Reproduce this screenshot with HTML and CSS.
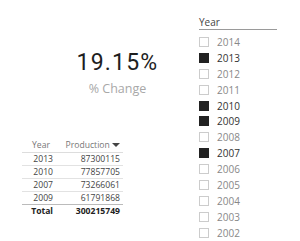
FILE: index.html
```html
<!DOCTYPE html>
<html lang="en">
<head>
    <meta charset="UTF-8">
    <title>Production</title>
    <link rel="stylesheet" href="styles.css">
</head>
<body>
    <div class="page">
        <div class="left">
            <!-- Карточка -->
            <div class="card">
                <div class="card-value">19.15%</div>
                <div class="card-label">% Change</div>
            </div>

            <!-- Таблица -->
            <table class="grid">
                <thead>
                    <tr>
                        <th class="col-year">Year</th>
                        <th class="col-prod">Production <span class="sort"></span></th>
                    </tr>
                </thead>
                <tbody>
                    <tr><td>2013</td><td>87300115</td></tr>
                    <tr><td>2010</td><td>77857705</td></tr>
                    <tr><td>2007</td><td>73266061</td></tr>
                    <tr><td>2009</td><td>61791868</td></tr>
                </tbody>
                <tfoot>
                    <tr><td>Total</td><td>300215749</td></tr>
                </tfoot>
            </table>
        </div>

        <!-- Слайсер -->
        <div class="slicer">
            <div class="slicer-title">Year</div>
            <ul class="slicer-list">
                <li><span class="box"></span>2014</li>
                <li class="on"><span class="box"></span>2013</li>
                <li><span class="box"></span>2012</li>
                <li><span class="box"></span>2011</li>
                <li class="on"><span class="box"></span>2010</li>
                <li class="on"><span class="box"></span>2009</li>
                <li><span class="box"></span>2008</li>
                <li class="on"><span class="box"></span>2007</li>
                <li><span class="box"></span>2006</li>
                <li><span class="box"></span>2005</li>
                <li><span class="box"></span>2004</li>
                <li><span class="box"></span>2003</li>
                <li><span class="box"></span>2002</li>
            </ul>
        </div>
    </div>
</body>
</html>
```

FILE: styles.css
```css
body {
    margin: 0;
    background-color: #fff;
    font-family: "Open Sans", "Liberation Sans", sans-serif;
    color: #333;
}

.page {
    display: flex;
    width: 300px;
    height: 241px;
    overflow: hidden;
}

.left {
    width: 199px;
    padding-top: 50px;
}

/* Карточка */
.card {
    display: flex;
    flex-direction: column;
    align-items: center;
    padding-left: 36px;
}

.card-value {
    font-family: "Roboto", sans-serif;
    font-weight: 400;
    font-size: 23px;
    letter-spacing: 1.2px;
    line-height: 26px;
    color: #1e1e1e;
}

.card-label {
    font-size: 12.5px;
    line-height: 16px;
    margin-top: 5px;
    color: #a8a8a8;
}

/* Таблица */
.grid {
    margin: 42px 0 0 22px;
    width: 101px;
    border-collapse: collapse;
    font-size: 8.6px;
    color: #444;
}

.grid th {
    font-weight: normal;
    color: #777;
    padding: 0 0 1px 0;
    height: 12px;
    text-align: left;
    border-bottom: 1px solid #ddd;
}

.grid th.col-year {
    padding-left: 10px;
}

.grid th.col-prod {
    text-align: right;
    padding-right: 3px;
    white-space: nowrap;
}

.sort {
    display: inline-block;
    width: 0;
    height: 0;
    border-left: 4px solid transparent;
    border-right: 4px solid transparent;
    border-top: 4px solid #444;
    vertical-align: 1px;
}

.grid td {
    height: 12px;
    padding: 0 3px 0 0;
    text-align: right;
    border-bottom: 1px solid #e2e2e2;
}

.grid td:first-child {
    width: 31px;
    padding-right: 0;
}

.grid tbody tr:last-child td {
    border-bottom: 1px solid #bbb;
}

.grid tfoot td {
    font-weight: bold;
    color: #222;
    border-bottom: none;
}

/* Слайсер */
.slicer {
    width: 78px;
    padding-top: 17px;
}

.slicer-title {
    font-size: 10px;
    line-height: 11px;
    color: #444;
    border-bottom: 1px solid #9a9a9a;
    padding-bottom: 1px;
}

.slicer-list {
    list-style: none;
    margin: 4px 0 0 0;
    padding: 0;
}

.slicer-list li {
    display: flex;
    align-items: center;
    height: 15.9px;
    font-size: 10px;
    color: #888;
}

.slicer-list li.on {
    color: #333;
}

.box {
    box-sizing: border-box;
    width: 10px;
    height: 10px;
    margin-right: 8px;
    border: 1.5px solid #ccc;
}

.slicer-list li.on .box {
    background-color: #222;
    border-color: #222;
}
```
